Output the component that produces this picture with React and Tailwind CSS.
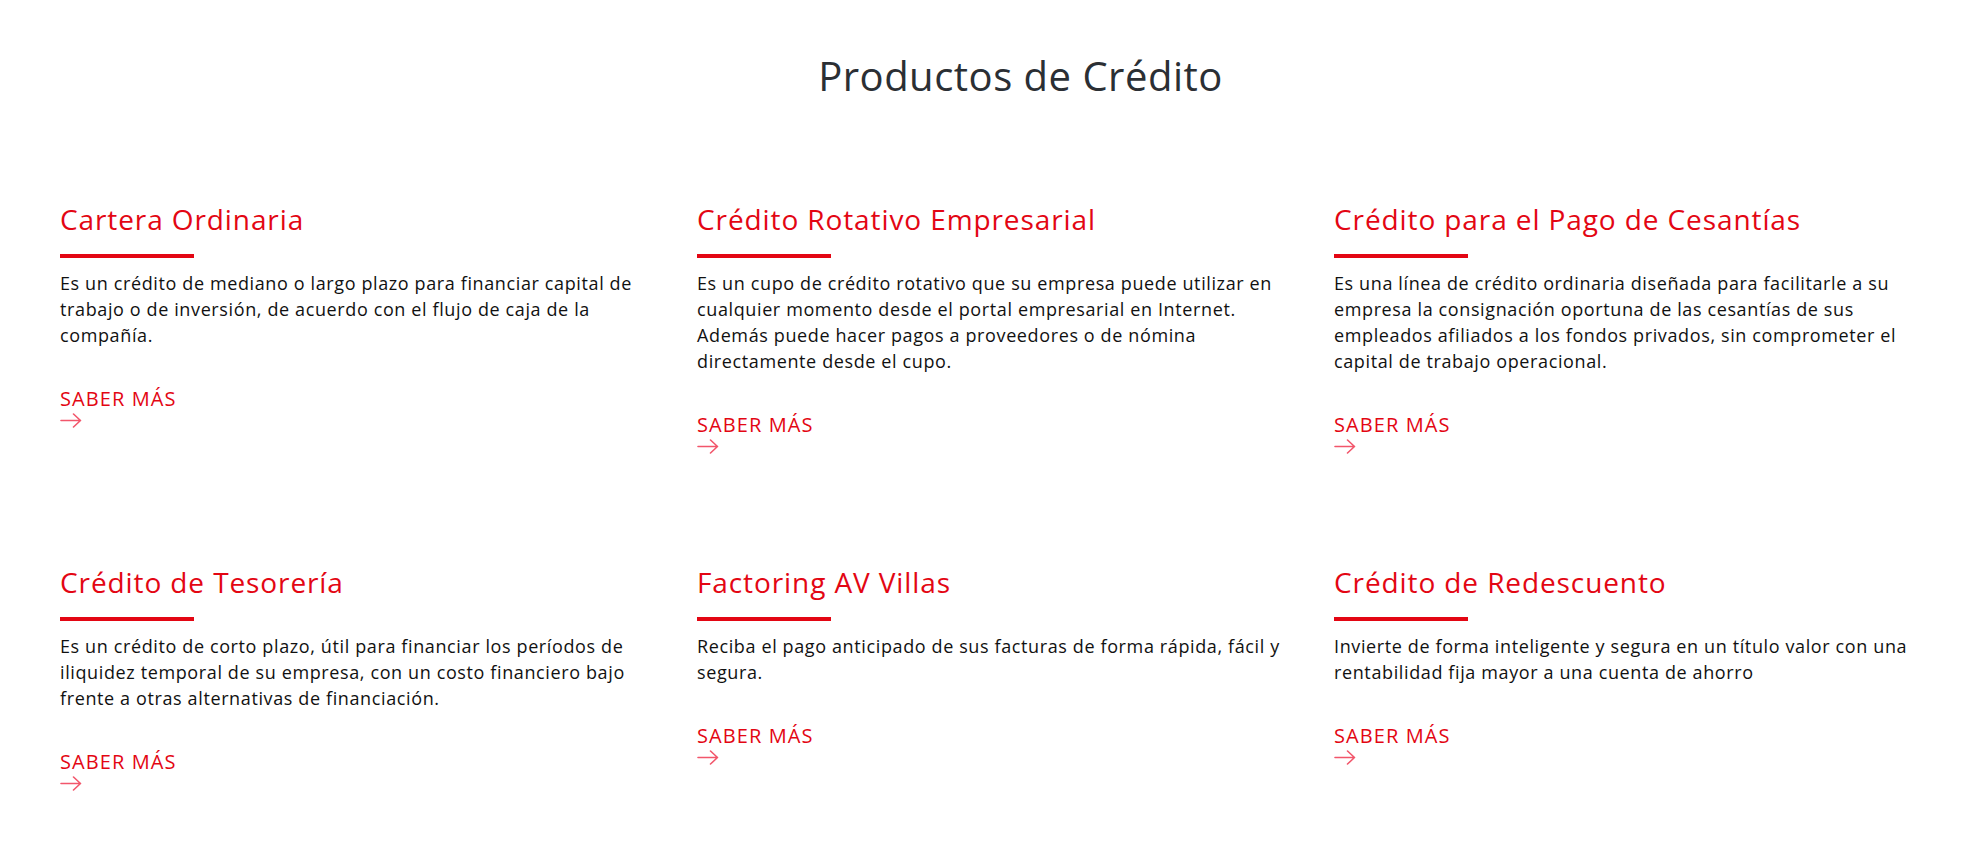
import React from "react";

const cards = [
  {
    title: "Cartera Ordinaria",
    text: "Es un crédito de mediano o largo plazo para financiar capital de trabajo o de inversión, de acuerdo con el flujo de caja de la compañía.",
  },
  {
    title: "Crédito Rotativo Empresarial",
    text: "Es un cupo de crédito rotativo que su empresa puede utilizar en cualquier momento desde el portal empresarial en Internet. Además puede hacer pagos a proveedores o de nómina directamente desde el cupo.",
  },
  {
    title: "Crédito para el Pago de Cesantías",
    text: "Es una línea de crédito ordinaria diseñada para facilitarle a su empresa la consignación oportuna de las cesantías de sus empleados afiliados a los fondos privados, sin comprometer el capital de trabajo operacional.",
  },
  {
    title: "Crédito de Tesorería",
    text: "Es un crédito de corto plazo, útil para financiar los períodos de iliquidez temporal de su empresa, con un costo financiero bajo frente a otras alternativas de financiación.",
  },
  {
    title: "Factoring AV Villas",
    text: "Reciba el pago anticipado de sus facturas de forma rápida, fácil y segura.",
  },
  {
    title: "Crédito de Redescuento",
    text: "Invierte de forma inteligente y segura en un título valor con una rentabilidad fija mayor a una cuenta de ahorro",
  },
];

function Arrow() {
  return (
    <svg width="22" height="15" viewBox="0 0 22 15" fill="none" className="block">
      <path d="M1 7.5H20.5M13.5 1L20.5 7.5L13.5 14" stroke="#f2566b" strokeWidth="1.6" strokeLinecap="round" strokeLinejoin="round" />
    </svg>
  );
}

function Card({ title, text }) {
  return (
    <div className="pr-[35px]">
      <h3 className="text-[28px] leading-[34px] tracking-[0.9px] text-[#e30613] font-normal">{title}</h3>
      <div className="mt-[18px] h-[4px] w-[134px] bg-[#e30613]" />
      <p className="mt-[12px] text-[18px] leading-[26px] tracking-[0.62px] text-[#111111]">{text}</p>
      <a className="mt-[40px] block text-[20px] leading-[22px] tracking-[1.1px] text-[#e30613] uppercase">SABER MÁS</a>
      <div className="mt-[3px]">
        <Arrow />
      </div>
    </div>
  );
}

export default function App() {
  return (
    <div className="w-full min-h-[844px] bg-white font-['Open_Sans',sans-serif]">
      <div className="pl-[60px] pr-[13px] pt-[52px]">
        <h2 className="pl-[10px] text-center text-[40px] leading-[48px] tracking-[0.5px] text-[#2b2f34] font-normal">Productos de Crédito</h2>
        <div className="mt-[102px] grid grid-cols-3 gap-y-[111px]">
          {cards.map((c) => (
            <Card key={c.title} {...c} />
          ))}
        </div>
      </div>
    </div>
  );
}
